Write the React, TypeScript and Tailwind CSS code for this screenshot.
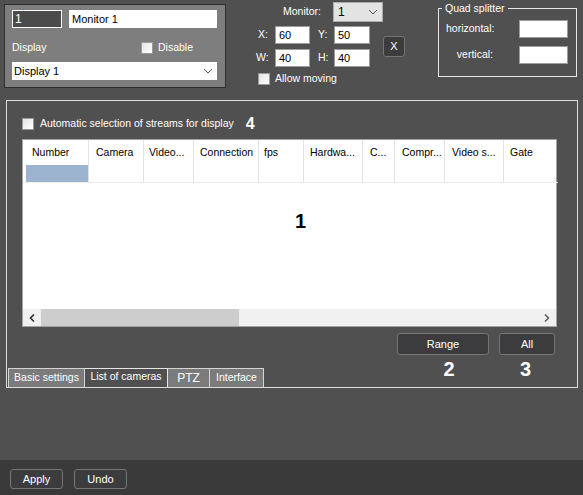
import React from 'react';

const columns = [
  { label: 'Number', w: 66, pl: 9 },
  { label: 'Camera', w: 55, pl: 7 },
  { label: 'Video...', w: 50, pl: 5 },
  { label: 'Connection', w: 65, pl: 6 },
  { label: 'fps', w: 45, pl: 5 },
  { label: 'Hardwa...', w: 59, pl: 6 },
  { label: 'C...', w: 32, pl: 7 },
  { label: 'Compr...', w: 50, pl: 7 },
  { label: 'Video s...', w: 59, pl: 7 },
  { label: 'Gate', w: 54, pl: 6 },
];

function Chevron({ className = '' }: { className?: string }) {
  return (
    <svg width="10" height="6" viewBox="0 0 10 6" className={className}>
      <path d="M1 1 L5 5 L9 1" fill="none" stroke="#555" strokeWidth="1" />
    </svg>
  );
}

function Check() {
  return <div className="w-[12px] h-[12px] bg-gradient-to-br from-[#e4e4e4] to-[#ffffff] border border-[#9a9a9a] shrink-0" />;
}

function Field({ w, value = '' }: { w: number; value?: string }) {
  return (
    <div
      className="h-[18px] bg-white border border-[#9c9c9c] text-black pl-[3px] leading-[16px] text-[11px]"
      style={{ width: w }}
    >
      {value}
    </div>
  );
}

function DarkButton({ label, w, h = 22 }: { label: string; w: number; h?: number }) {
  return (
    <div
      className="flex items-center justify-center bg-[#3c3c3f] border border-[#757575] rounded-[3px] text-white text-[11px]"
      style={{ width: w, height: h }}
    >
      {label}
    </div>
  );
}

export default function App() {
  return (
    <div className="w-[583px] h-[495px] bg-[#505050] flex flex-col text-white text-[10.5px] font-['Liberation_Sans',Arial,sans-serif] overflow-hidden">
      {/* Top settings */}
      <div className="h-[100px] flex items-start shrink-0">
        <div className="ml-[4px] mt-[4px] w-[222px] h-[84px] bg-[#7e7e7e] border border-[#2e2e2e] pl-[7px] pt-[5px]">
          <div className="flex h-[18px]">
            <div className="w-[50px] h-[18px] bg-[#4b4b4b] border border-white pl-[2px] leading-[16px] text-[12px]">1</div>
            <div className="ml-[7px] w-[148px] h-[18px] bg-white text-black pl-[3px] leading-[18px] text-[11px]">Monitor 1</div>
          </div>
          <div className="flex items-center h-[16px] mt-[12px]">
            <span className="w-[129px]">Display</span>
            <Check />
            <span className="ml-[5px]">Disable</span>
          </div>
          <div className="mt-[6px] w-[205px] h-[18px] bg-white text-black flex items-center justify-between pl-[2px] pr-[4px] text-[11px]">
            <span>Display 1</span>
            <Chevron />
          </div>
        </div>

        <div className="ml-[30px] pt-[2px] w-[150px] flex flex-col">
          <div className="flex items-center h-[20px]">
            <span className="ml-[27px] w-[50px]">Monitor:</span>
            <div className="w-[50px] h-[20px] bg-[#e3e3e3] border border-[#adadad] text-black flex items-center justify-between pl-[4px] pr-[4px] text-[12px]">
              <span>1</span>
              <Chevron />
            </div>
          </div>
          <div className="flex items-center mt-[4px]">
            <div className="flex flex-col gap-[5px]">
              <div className="flex items-center">
                <span className="w-[19px] pl-[2px]">X:</span>
                <Field w={35} value="60" />
                <span className="ml-[8px] w-[16px]">Y:</span>
                <Field w={36} value="50" />
              </div>
              <div className="flex items-center">
                <span className="w-[19px]">W:</span>
                <Field w={35} value="40" />
                <span className="ml-[8px] w-[16px]">H:</span>
                <Field w={36} value="40" />
              </div>
            </div>
            <div className="ml-[13px]">
              <DarkButton label="X" w={22} h={21} />
            </div>
          </div>
          <div className="flex items-center mt-[4px] ml-[2px]">
            <Check />
            <span className="ml-[5px]">Allow moving</span>
          </div>
        </div>

        <fieldset className="ml-[32px] mt-[2px] w-[139px] h-[75px] border border-[#e6e6e6]">
          <legend className="ml-[3px] px-[3px] leading-[13px]">Quad splitter</legend>
          <div className="flex items-center pl-[7px] mt-[5px]">
            <span className="w-[47px] text-right">horizontal:</span>
            <div className="ml-[26px] w-[49px] h-[18px] bg-white border border-[#9c9c9c]" />
          </div>
          <div className="flex items-center pl-[7px] mt-[8px]">
            <span className="w-[47px] text-right">vertical:</span>
            <div className="ml-[26px] w-[49px] h-[18px] bg-white border border-[#9c9c9c]" />
          </div>
        </fieldset>
      </div>

      {/* Main tab panel */}
      <div className="ml-[6px] w-[572px] h-[288px] border border-[#dcdcdc] flex flex-col shrink-0">
        <div className="flex items-center h-[16px] mt-[15px] pl-[15px]">
          <Check />
          <span className="ml-[6px]">Automatic selection of streams for display</span>
          <span className="ml-[12px] text-[16px] font-bold leading-[16px]">4</span>
        </div>

        <div className="relative mt-[7px] ml-[15px] w-[535px] h-[188px] bg-white border border-[#a3a3a3] flex flex-col text-black">
          <div className="flex">
            {columns.map((c) => (
              <div key={c.label} className="shrink-0 border-r border-[#e4e4e4] last:border-r-0" style={{ width: c.w }}>
                <div className="h-[25px] flex items-center whitespace-nowrap" style={{ paddingLeft: c.pl }}>
                  {c.label}
                </div>
                <div className="h-[18px] border-b border-[#ececec] pl-[3px]">
                  {c.label === 'Number' && <div className="h-full bg-[#9db4d0]" />}
                </div>
              </div>
            ))}
          </div>
          <div className="flex-1" />
          <div className="h-[17px] bg-[#f0f0f0] flex items-center">
            <div className="w-[18px] flex justify-center">
              <svg width="6" height="8" viewBox="0 0 6 8">
                <path d="M5 0.5 L1.5 4 L5 7.5" fill="none" stroke="#333" strokeWidth="1.6" />
              </svg>
            </div>
            <div className="w-[198px] h-[17px] bg-[#cdcdcd]" />
            <div className="flex-1" />
            <div className="w-[18px] flex justify-center">
              <svg width="6" height="8" viewBox="0 0 6 8">
                <path d="M1 0.5 L4.5 4 L1 7.5" fill="none" stroke="#555" strokeWidth="1.4" />
              </svg>
            </div>
          </div>
          <span className="absolute left-[272px] top-[70px] text-[20px] font-bold leading-[22px]">1</span>
        </div>

        <div className="flex-1 flex items-end justify-between mt-[6px]">
          <div className="flex ml-[1px] h-[19px]">
            <div className="w-[77px] bg-[#7b7b7b] border border-b-0 border-[#d4d4d4] flex items-center justify-center">Basic settings</div>
            <div className="w-[83px] border-t border-r border-[#e6e6e6] flex items-center justify-center pb-[2px]">List of cameras</div>
            <div className="w-[42px] bg-[#7b7b7b] border-t border-r border-[#d4d4d4] flex items-center justify-center text-[12px]">PTZ</div>
            <div className="w-[54px] bg-[#7b7b7b] border-t border-r border-[#d4d4d4] flex items-center justify-center">Interface</div>
          </div>
          <div className="self-start pr-[22px] flex flex-col">
            <div className="flex gap-[10px]">
              <DarkButton label="Range" w={92} />
              <DarkButton label="All" w={56} />
            </div>
            <div className="flex gap-[10px] text-[20px] font-bold leading-[22px] mt-[3px]">
              <div className="w-[92px] text-center pl-[12px]">2</div>
              <div className="w-[56px] text-center pr-[3px]">3</div>
            </div>
          </div>
        </div>
      </div>

      <div className="flex-1" />

      {/* Bottom bar */}
      <div className="h-[35px] bg-[#3b3a3b] flex items-start pt-[9px] pl-[10px] gap-[11px] shrink-0">
        <DarkButton label="Apply" w={53} h={20} />
        <DarkButton label="Undo" w={53} h={20} />
      </div>
    </div>
  );
}
